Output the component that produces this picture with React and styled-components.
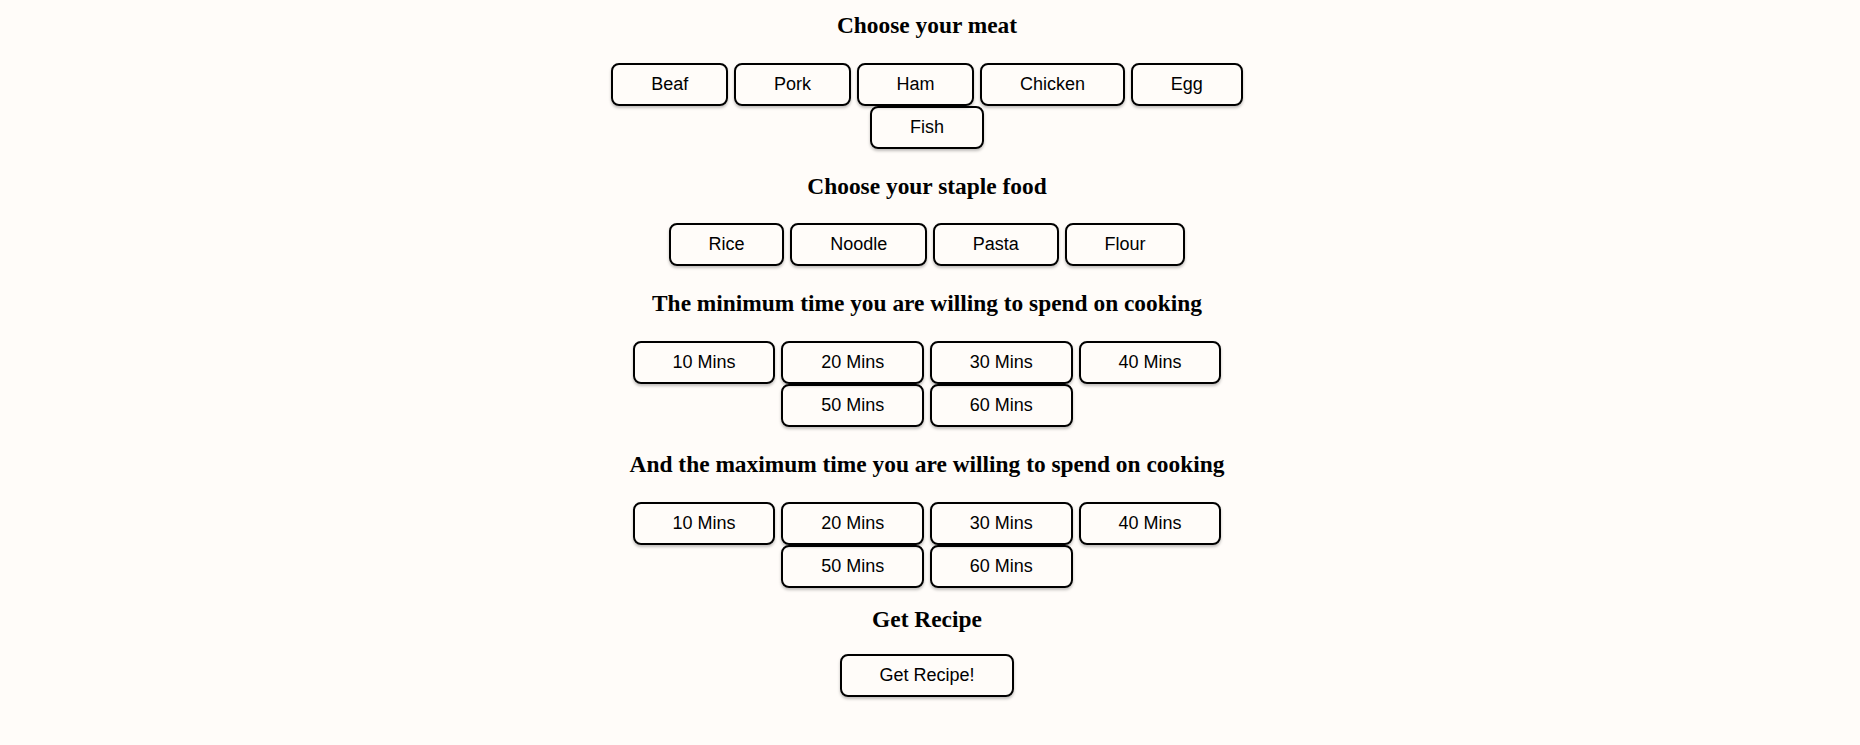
import React, {useState} from 'react';
import styled, {createGlobalStyle} from 'styled-components';

const meats = ['Beaf', 'Pork', 'Ham', 'Chicken', 'Egg', 'Fish'];
const staples = ['Rice', 'Noodle', 'Pasta', 'Flour'];
const times = [10, 20, 30, 40, 50, 60];

const App = () => {
    // 선택 상태
    const [meat, setMeat] = useState(null);
    const [staple, setStaple] = useState(null);
    const [minTime, setMinTime] = useState(null);
    const [maxTime, setMaxTime] = useState(null);

    return (
    <>
        <GlobalStyle />
        <Page>
            {/* 고기 선택 */}
            <Section>
                <Heading>Choose your meat</Heading>
                <ButtonRow>
                    {meats.map((m) => (
                        <Choice key={m} $active={meat === m} onClick={() => setMeat(m)}>{m}</Choice>
                    ))}
                </ButtonRow>
            </Section>

            {/* 주식 선택 */}
            <Section>
                <Heading>Choose your staple food</Heading>
                <ButtonRow>
                    {staples.map((s) => (
                        <Choice key={s} $active={staple === s} onClick={() => setStaple(s)}>{s}</Choice>
                    ))}
                </ButtonRow>
            </Section>

            {/* 최소 시간 */}
            <Section>
                <Heading>The minimum time you are willing to spend on cooking</Heading>
                <ButtonRow>
                    {times.map((t) => (
                        <Choice key={t} $active={minTime === t} onClick={() => setMinTime(t)}>{t} Mins</Choice>
                    ))}
                </ButtonRow>
            </Section>

            {/* 최대 시간 */}
            <Section>
                <Heading>And the maximum time you are willing to spend on cooking</Heading>
                <ButtonRow>
                    {times.map((t) => (
                        <Choice key={t} $active={maxTime === t} onClick={() => setMaxTime(t)}>{t} Mins</Choice>
                    ))}
                </ButtonRow>
            </Section>

            {/* 레시피 */}
            <Section $compact>
                <Heading $compact>Get Recipe</Heading>
                <ButtonRow>
                    <Choice>Get Recipe!</Choice>
                </ButtonRow>
            </Section>
        </Page>
    </>
    );
};

export default App;

/* CSS */
const GlobalStyle = createGlobalStyle`
    html, body {
        margin: 0;
        background: #fffcf9;
    }
    body {
        font-family: "Liberation Serif", "Times New Roman", serif;
        font-size: 20px;
        color: #000;
    }
`;

const Page = styled.div`
    display: flex;
    flex-direction: column;
    align-items: center;
    padding: 12px 6px 40px 0;
`;

const Section = styled.div`
    display: flex;
    flex-direction: column;
    align-items: center;
    margin-top: ${(p) => (p.$compact ? '18.8px' : '24.2px')};

    &:first-child {
        margin-top: 0;
    }
`;

const Heading = styled.h3`
    margin: 0 0 ${(p) => (p.$compact ? '20.5px' : '23.5px')};
    font-family: "Liberation Serif", "Times New Roman", serif;
    font-size: 23.4px;
    font-weight: bold;
    color: #000;
`;

const ButtonRow = styled.div`
    display: flex;
    flex-wrap: wrap;
    justify-content: center;
    column-gap: 6px;
    row-gap: 0;
    max-width: 700px;
`;

const Choice = styled.button`
    padding: 9px 37.8px;
    border: 2px solid #000;
    border-radius: 8px;
    background: ${(p) => (p.$active ? '#f1ebe4' : 'transparent')};
    box-shadow: 0 2px 3px rgba(0, 0, 0, 0.25);
    color: #000;
    font-family: "Liberation Sans", Arial, sans-serif;
    font-size: 18px;
    line-height: normal;
    cursor: pointer;
`;
